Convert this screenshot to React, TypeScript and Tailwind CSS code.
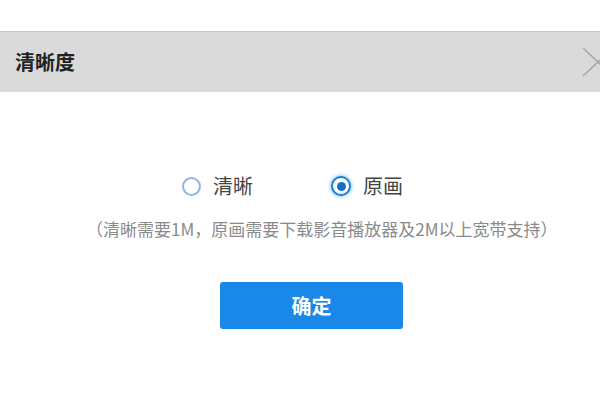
export default function App() {
  return (
    <div
      className="w-[600px] h-[400px] overflow-hidden bg-white"
      style={{ fontFamily: '"Noto Sans CJK SC", "Noto Sans", sans-serif' }}
    >
      <div className="h-[31px]" />
      <div className="h-[61px] bg-[#dadada] border-t border-[#c4c4c4] flex items-center justify-between pl-[15px]">
        <span className="text-[20px] font-bold text-[#222]">清晰度</span>
        <svg width="36" height="36" viewBox="0 0 36 36" className="-mr-[16px]">
          <path d="M3 4 L33 32 M33 4 L3 32" stroke="#a8a8a8" strokeWidth="1.6" fill="none" />
        </svg>
      </div>

      <div className="mt-[82px] h-[24px] flex items-center pl-[182px]">
        <label className="flex items-center gap-[12px]">
          <span className="w-[19px] h-[19px] rounded-full border-2 border-[#94b6d4] bg-white" />
          <span className="text-[20px] text-[#444] leading-none">清晰</span>
        </label>
        <label className="flex items-center gap-[12px] ml-[78px]">
          <span className="w-[20px] h-[20px] rounded-full border-2 border-[#1a7fd6] bg-white flex items-center justify-center shadow-[0_0_4px_#5aa8ee]">
            <span className="w-[9px] h-[9px] rounded-full bg-[#1470c9]" />
          </span>
          <span className="text-[20px] text-[#444] leading-none">原画</span>
        </label>
      </div>

      <p className="mt-[19px] h-[24px] leading-[24px] pl-[86px] text-[17px] text-[#8a8a8a] whitespace-nowrap">
        （清晰需要1M，原画需要下载影音播放器及2M以上宽带支持）
      </p>

      <div className="mt-[41px] pl-[220px]">
        <button className="w-[183px] h-[47px] rounded-[3px] bg-[#1a88e8] text-white text-[20px] font-bold">
          确定
        </button>
      </div>
    </div>
  );
}
